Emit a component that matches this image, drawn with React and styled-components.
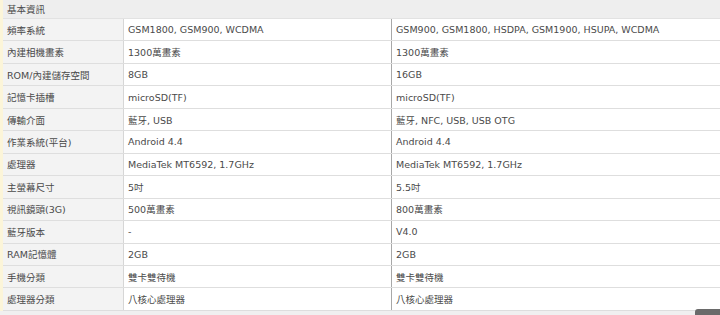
import React from 'react';
import styled, { createGlobalStyle } from 'styled-components';

const GlobalStyle = createGlobalStyle`
  html, body {
    margin: 0;
    padding: 0;
    background: #ffffff;
  }
  body {
    font-family: "DejaVu Sans", "Noto Sans CJK TC", sans-serif;
    font-size: 9.5px;
    color: #4a4a4a;
    overflow: hidden;
  }
`;

const Page = styled.div`
  position: relative;
  width: 720px;
  height: 315px;
  overflow: hidden;
  background: #f0f0f0;
`;

const Sheet = styled.div`
  border-left: 3px solid #fcf5d9;
  background: #ffffff;
`;

const Heading = styled.div`
  height: 19px;
  display: flex;
  align-items: center;
  padding-left: 4px;
  background: #eeeeee;
  border-bottom: 1px solid #e2e2e2;
  box-sizing: border-box;
`;

const Row = styled.div`
  display: grid;
  grid-template-columns: 121px 268px 1fr;
  height: 22.46px;
  border-bottom: 1px solid #dedede;
  box-sizing: border-box;
`;

const Cell = styled.div`
  display: flex;
  align-items: center;
  padding-left: ${(p) => (p.$label ? '4px' : '4px')};
  background: ${(p) => (p.$label ? '#f3f3f3' : '#ffffff')};
  border-right: ${(p) => (p.$divider ? `1px solid ${p.$divider}` : 'none')};
  white-space: nowrap;
`;

const TopButton = styled.div`
  position: absolute;
  right: 0;
  bottom: -4px;
  width: 25px;
  height: 10px;
  border-radius: 3px 0 0 0;
  background: #6a6a6a;
`;

const specs = [
  ['頻率系統', 'GSM1800, GSM900, WCDMA', 'GSM900, GSM1800, HSDPA, GSM1900, HSUPA, WCDMA'],
  ['內建相機畫素', '1300萬畫素', '1300萬畫素'],
  ['ROM/內建儲存空間', '8GB', '16GB'],
  ['記憶卡插槽', 'microSD(TF)', 'microSD(TF)'],
  ['傳輸介面', '藍牙, USB', '藍牙, NFC, USB, USB OTG'],
  ['作業系統(平台)', 'Android 4.4', 'Android 4.4'],
  ['處理器', 'MediaTek MT6592, 1.7GHz', 'MediaTek MT6592, 1.7GHz'],
  ['主螢幕尺寸', '5吋', '5.5吋'],
  ['視訊鏡頭(3G)', '500萬畫素', '800萬畫素'],
  ['藍牙版本', '-', 'V4.0'],
  ['RAM記憶體', '2GB', '2GB'],
  ['手機分類', '雙卡雙待機', '雙卡雙待機'],
  ['處理器分類', '八核心處理器', '八核心處理器'],
];

const App = () => (
  <Page>
    <GlobalStyle />
    <Sheet>
      <Heading>基本資訊</Heading>
      {specs.map(([label, a, b]) => (
        <Row key={label}>
          <Cell $label $divider="#d6d6d6">{label}</Cell>
          <Cell $divider="#a8a8a8">{a}</Cell>
          <Cell>{b}</Cell>
        </Row>
      ))}
    </Sheet>
    <TopButton />
  </Page>
);

export default App;
